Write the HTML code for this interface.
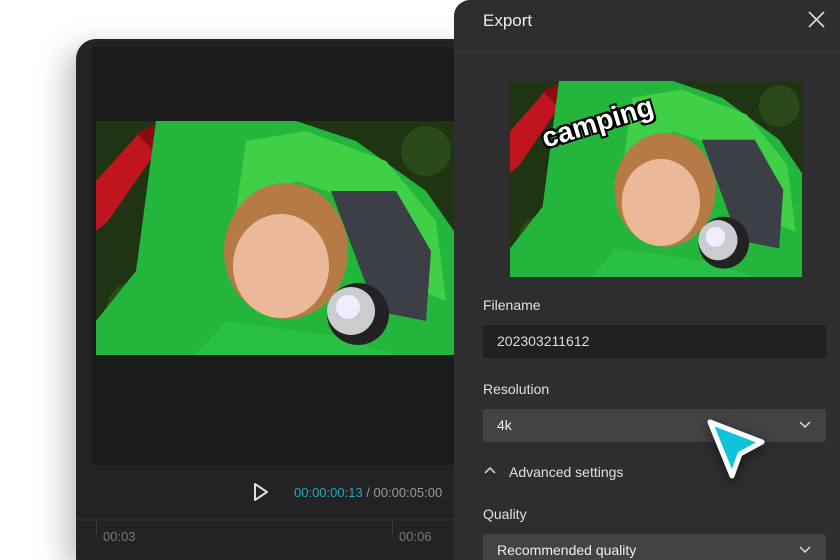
<!DOCTYPE html>
<html><head><meta charset="utf-8"><style>
*{margin:0;padding:0;box-sizing:border-box}
html,body{width:840px;height:560px;overflow:hidden}
body{background:#fff;position:relative;font-family:"Liberation Sans",sans-serif}
.ed{position:absolute;left:76px;top:39px;width:400px;height:521px;background:#232325;border-radius:20px 0 0 0;box-shadow:-10px 10px 30px rgba(0,0,0,.25)}
.edin{position:absolute;left:92px;top:47px;width:380px;height:418px;background:#1b1b1b}
.ph{position:absolute}
.tl{position:absolute;left:76px;top:518px;width:380px;height:3px;background:#2c2c2e}
.ex{position:absolute;left:454px;top:0;width:386px;height:560px;background:#2e2e30;border-radius:16px 0 0 0;color:#e6e6e6;overflow:hidden}
.lbl{position:absolute;left:29px;font-size:14px;color:#e0e0e0}
.box{position:absolute;left:29px;width:343px;height:33px;border-radius:3px;font-size:14px;padding-left:14px;line-height:33px}
</style></head><body>
<svg width="0" height="0" style="position:absolute"><defs>
<symbol id="photo" viewBox="0 0 358 234" preserveAspectRatio="none">
<rect width="358" height="234" fill="#1e3412"/>
<circle cx="40" cy="190" r="30" fill="#2a4a18"/><circle cx="330" cy="30" r="25" fill="#2b4a1a"/>
<path d="M0 60 L45 10 L62 28 L12 100 L0 110Z" fill="#c0141e"/>
<path d="M40 12 L58 4 L70 22 L58 30Z" fill="#8a0c12"/>
<path d="M60 0 L200 0 L260 20 L330 70 L358 110 L358 234 L0 234 L0 200 L40 150 Z" fill="#23b53c"/>
<path d="M150 20 L210 10 L290 40 L340 100 L350 180 L300 160 L260 80 L200 60 L140 90 Z" fill="#3fd048"/>
<path d="M235 70 L300 70 L335 130 L330 200 L280 190 Z" fill="#3c3f46"/>
<ellipse cx="190" cy="130" rx="62" ry="68" fill="#b57a46"/>
<ellipse cx="185" cy="145" rx="48" ry="52" fill="#eab99a"/>
<path d="M130 200 L240 215 L300 234 L100 234Z" fill="#2ac046"/>
<circle cx="262" cy="193" r="31" fill="#222"/>
<circle cx="255" cy="190" r="24" fill="#c9cdd0"/><circle cx="252" cy="186" r="12" fill="#eef"/>
</symbol></defs></svg>
<div class="ed"></div><div class="edin"></div>
<svg class="ph" style="left:96px;top:121px" width="358" height="234"><use href="#photo"/></svg>
<svg class="ph" style="left:252px;top:482px" width="18" height="20"><path d="M3 2 L15 10 L3 18Z" fill="none" stroke="#ddd" stroke-width="2" stroke-linejoin="round"/></svg>
<div style="position:absolute;left:294px;top:485px;font-size:13px;color:#23a9b8;white-space:nowrap">00:00:00:13 <span style="color:#9a9a9a">/ 00:00:05:00</span></div>
<div class="tl"></div>
<div style="position:absolute;left:96px;top:521px;width:1px;height:14px;background:#3a3a3a"></div>
<div style="position:absolute;left:392px;top:521px;width:1px;height:14px;background:#3a3a3a"></div>
<div style="position:absolute;left:103px;top:529px;font-size:13px;color:#777">00:03</div>
<div style="position:absolute;left:399px;top:529px;font-size:13px;color:#777">00:06</div>
<div class="ex">
<div style="position:absolute;left:29px;top:11px;font-size:17px;color:#eee">Export</div>
<svg style="position:absolute;left:354px;top:11px" width="17" height="17"><path d="M1 1L16 16M16 1L1 16" stroke="#ddd" stroke-width="1.6"/></svg>
<div style="position:absolute;left:0;top:52px;width:386px;height:1px;background:#3c3c3e"></div>
<svg class="ph" style="left:56px;top:81px" width="292" height="196"><use href="#photo"/></svg>
<div style="position:absolute;left:84px;top:124px;font-size:28px;color:#fff;font-weight:bold;transform:rotate(-17deg);transform-origin:left top;text-shadow:-2px -2px 0 #000,2px -2px 0 #000,-2px 2px 0 #000,2px 2px 0 #000">camping</div>
<div class="lbl" style="top:297px">Filename</div>
<div class="box" style="top:325px;background:#202022;color:#ddd">202303211612</div>
<div class="lbl" style="top:381px">Resolution</div>
<div class="box" style="top:409px;background:#434345;color:#eee">4k</div>
<svg style="position:absolute;left:345px;top:421px" width="12" height="8"><path d="M1 1L6 6L11 1" fill="none" stroke="#ddd" stroke-width="1.5"/></svg>
<svg style="position:absolute;left:30px;top:466px" width="12" height="8"><path d="M1 7L6 2L11 7" fill="none" stroke="#ddd" stroke-width="1.5"/></svg>
<div class="lbl" style="top:464px;left:55px">Advanced settings</div>
<div class="lbl" style="top:506px">Quality</div>
<div class="box" style="top:534px;background:#434345;color:#eee">Recommended quality</div>
<svg style="position:absolute;left:345px;top:546px" width="12" height="8"><path d="M1 1L6 6L11 1" fill="none" stroke="#ddd" stroke-width="1.5"/></svg>
<svg style="position:absolute;left:246px;top:414px;filter:drop-shadow(0 4px 6px rgba(0,0,0,.5))" width="70" height="70"><path d="M10 8 L62 28 L40 40 L32 62 Z" fill="#0fc3dc" stroke="#fff" stroke-width="5" stroke-linejoin="round"/></svg>
</div>
</body></html>
